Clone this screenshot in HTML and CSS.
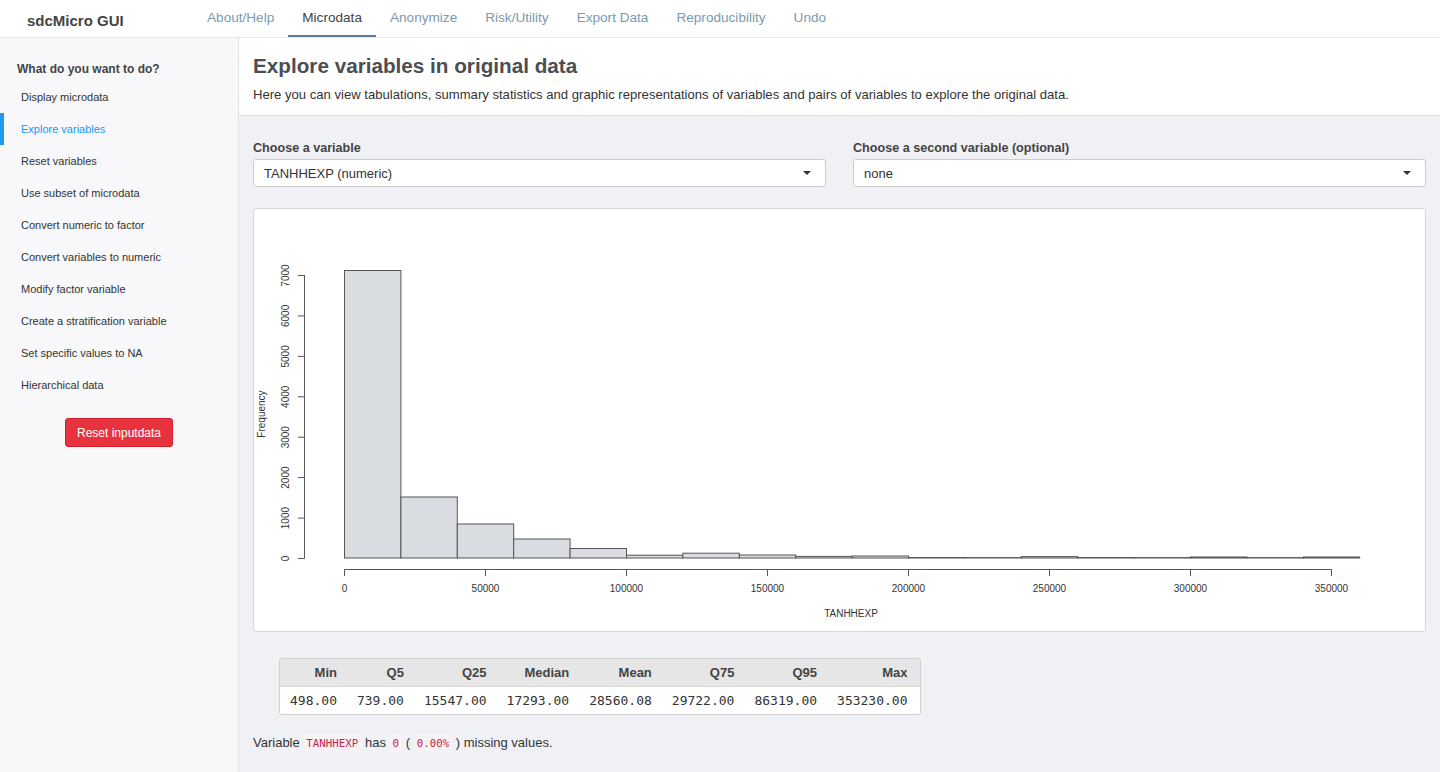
FILE: index.html
```html
<!DOCTYPE html>
<html lang="en">
<head>
<meta charset="utf-8">
<title>sdcMicro GUI</title>
<link rel="stylesheet" href="styles.css">
</head>
<body>
<header class="navbar">
  <div class="brand">sdcMicro GUI</div>
  <nav class="tabs">
    <a class="tab">About/Help</a>
    <a class="tab active">Microdata</a>
    <a class="tab">Anonymize</a>
    <a class="tab">Risk/Utility</a>
    <a class="tab">Export Data</a>
    <a class="tab">Reproducibility</a>
    <a class="tab">Undo</a>
  </nav>
</header>
<div class="layout">
  <aside class="sidebar">
    <h4 class="side-title">What do you want to do?</h4>
    <ul class="menu">
      <li class="menu-item">Display microdata</li>
      <li class="menu-item active">Explore variables</li>
      <li class="menu-item">Reset variables</li>
      <li class="menu-item">Use subset of microdata</li>
      <li class="menu-item">Convert numeric to factor</li>
      <li class="menu-item">Convert variables to numeric</li>
      <li class="menu-item">Modify factor variable</li>
      <li class="menu-item">Create a stratification variable</li>
      <li class="menu-item">Set specific values to NA</li>
      <li class="menu-item">Hierarchical data</li>
    </ul>
    <div class="btn-wrap"><button class="btn-danger">Reset inputdata</button></div>
  </aside>
  <main class="main">
    <section class="page-head">
      <h2 class="page-title">Explore variables in original data</h2>
      <p class="page-sub">Here you can view tabulations, summary statistics and graphic representations of variables and pairs of variables to explore the original data.</p>
    </section>
    <section class="content">
      <div class="selects">
        <div class="field">
          <label class="field-label">Choose a variable</label>
          <div class="select"><span>TANHHEXP (numeric)</span><span class="caret"></span></div>
        </div>
        <div class="field">
          <label class="field-label">Choose a second variable (optional)</label>
          <div class="select"><span>none</span><span class="caret"></span></div>
        </div>
      </div>
      <div class="plot-card">
        <svg class="plot" width="1171" height="422" viewBox="254 209 1171 422" xmlns="http://www.w3.org/2000/svg">
          <g class="bars" fill="#d9dde1" stroke="#555" stroke-width="1">
            <rect x="344.5" y="270.5" width="56.4" height="287.5"/>
            <rect x="400.9" y="497" width="56.4" height="61"/>
            <rect x="457.3" y="524" width="56.4" height="34"/>
            <rect x="513.7" y="539" width="56.4" height="19"/>
            <rect x="570.1" y="548.5" width="56.4" height="9.5"/>
            <rect x="626.5" y="555.2" width="56.4" height="2.8"/>
            <rect x="682.9" y="553.2" width="56.4" height="4.8"/>
            <rect x="739.3" y="555" width="56.4" height="3"/>
            <rect x="795.7" y="556.4" width="56.4" height="1.6"/>
            <rect x="852.1" y="556" width="56.4" height="2"/>
            <rect x="908.5" y="557.5" width="56.4" height="0.5"/>
            <rect x="964.9" y="557.6" width="56.4" height="0.4"/>
            <rect x="1021.3" y="556.6" width="56.4" height="1.4"/>
            <rect x="1077.7" y="557.5" width="56.4" height="0.5"/>
            <rect x="1134.1" y="557.6" width="56.4" height="0.4"/>
            <rect x="1190.5" y="557" width="56.4" height="1"/>
            <rect x="1246.9" y="557.6" width="56.4" height="0.4"/>
            <rect x="1303.3" y="557" width="56.4" height="1"/>
          </g>
          <g class="axes" stroke="#555" stroke-width="1" fill="none">
            <path d="M304.5 275 V558.5"/>
            <path d="M298 558.5 H304.5 M298 518.1 H304.5 M298 477.6 H304.5 M298 437.2 H304.5 M298 396.8 H304.5 M298 356.4 H304.5 M298 315.9 H304.5 M298 275.5 H304.5"/>
            <path d="M344.5 569.5 H1331.5"/>
            <path d="M344.5 569.5 V576 M485.5 569.5 V576 M626.5 569.5 V576 M767.5 569.5 V576 M908.5 569.5 V576 M1049.5 569.5 V576 M1190.5 569.5 V576 M1331.5 569.5 V576"/>
          </g>
          <g class="ylabels" font-family="Liberation Sans, Arial, sans-serif" font-size="10" fill="#333" text-anchor="middle">
            <text x="289" y="558.5" transform="rotate(-90 289 558.5)">0</text>
            <text x="289" y="518.1" transform="rotate(-90 289 518.1)">1000</text>
            <text x="289" y="477.6" transform="rotate(-90 289 477.6)">2000</text>
            <text x="289" y="437.2" transform="rotate(-90 289 437.2)">3000</text>
            <text x="289" y="396.8" transform="rotate(-90 289 396.8)">4000</text>
            <text x="289" y="356.4" transform="rotate(-90 289 356.4)">5000</text>
            <text x="289" y="315.9" transform="rotate(-90 289 315.9)">6000</text>
            <text x="289" y="275.5" transform="rotate(-90 289 275.5)">7000</text>
            <text x="265" y="414" transform="rotate(-90 265 414)">Frequency</text>
          </g>
          <g class="xlabels" font-family="Liberation Sans, Arial, sans-serif" font-size="10" fill="#333" text-anchor="middle">
            <text x="344.5" y="592">0</text>
            <text x="485.5" y="592">50000</text>
            <text x="626.5" y="592">100000</text>
            <text x="767.5" y="592">150000</text>
            <text x="908.5" y="592">200000</text>
            <text x="1049.5" y="592">250000</text>
            <text x="1190.5" y="592">300000</text>
            <text x="1331.5" y="592">350000</text>
            <text x="851" y="617">TANHHEXP</text>
          </g>
        </svg>
      </div>
      <table class="stats">
        <thead>
          <tr><th>Min</th><th>Q5</th><th>Q25</th><th>Median</th><th>Mean</th><th>Q75</th><th>Q95</th><th>Max</th></tr>
        </thead>
        <tbody>
          <tr><td>498.00</td><td>739.00</td><td>15547.00</td><td>17293.00</td><td>28560.08</td><td>29722.00</td><td>86319.00</td><td>353230.00</td></tr>
        </tbody>
      </table>
      <p class="missing">Variable <code>TANHHEXP</code> has <code>0</code> ( <code>0.00%</code> ) missing values.</p>
    </section>
  </main>
</div>
</body>
</html>
```
FILE: styles.css
```css
* { box-sizing: border-box; }
html, body { margin: 0; padding: 0; height: 100%; }
body {
  font-family: "Liberation Sans", Arial, Helvetica, sans-serif;
  color: #333;
  background: #fff;
  overflow: hidden;
}

/* Navbar */
.navbar {
  display: flex;
  height: 38px;
  border-bottom: 1px solid #e5e5e5;
  background: #fff;
}
.brand {
  width: 193px;
  padding-left: 27px;
  font-weight: 700;
  font-size: 15px;
  color: #444;
  display: flex;
  align-items: center;
  padding-top: 4px;
}
.tabs { display: flex; }
.tab {
  display: flex;
  align-items: center;
  padding: 0 14px;
  font-size: 13.6px;
  color: #7a9ab0;
  height: 37px;
  border-bottom: 2px solid transparent;
}
.tab.active {
  color: #444;
  border-bottom-color: #5d7c96;
}

/* Layout */
.layout {
  display: flex;
  height: calc(100vh - 38px);
}
.sidebar {
  width: 239px;
  flex: none;
  background: #f8f8fa;
  border-right: 1px solid #e2e2e6;
  padding-top: 24px;
}
.side-title {
  margin: 0 0 4px;
  padding-left: 17px;
  font-size: 12px;
  line-height: 15px;
  font-weight: 700;
  color: #444;
}
.menu { list-style: none; margin: 0; padding: 0; }
.menu-item {
  height: 32px;
  line-height: 32px;
  padding-left: 21px;
  font-size: 11px;
  color: #333;
}
.menu-item.active {
  color: #2196f3;
  box-shadow: inset 4px 0 0 #1e9bf0;
}
.btn-wrap {
  display: flex;
  justify-content: center;
  margin-top: 17px;
}
.btn-danger {
  width: 108px;
  height: 29px;
  background: #e8333f;
  border: 1px solid #d21f2c;
  border-radius: 3px;
  color: #fff;
  font-family: inherit;
  font-size: 12px;
  padding: 0;
}

/* Main */
.main {
  flex: 1;
  background: #f0f1f5;
  display: flex;
  flex-direction: column;
}
.page-head {
  background: #fff;
  padding: 16px 14px 12px;
  border-bottom: 1px solid #dcdde0;
}
.page-title {
  margin: 0 0 9px;
  font-size: 20.7px;
  line-height: 24px;
  font-weight: 700;
  color: #4a4f55;
}
.page-sub {
  margin: 0;
  font-size: 13.1px;
  line-height: 16px;
  color: #333;
}
.content {
  padding: 25px 14px 0;
}
.selects {
  display: grid;
  grid-template-columns: 1fr 1fr;
  column-gap: 27px;
}
.field-label {
  display: block;
  font-size: 12.6px;
  line-height: 15px;
  font-weight: 700;
  color: #444;
  margin-bottom: 3px;
}
.select {
  display: flex;
  align-items: center;
  justify-content: space-between;
  height: 28px;
  background: #fff;
  border: 1px solid #ccc;
  border-radius: 3px;
  padding: 0 14px 0 10px;
  font-size: 13px;
  color: #333;
}
.caret {
  width: 0;
  height: 0;
  border-left: 4px solid transparent;
  border-right: 4px solid transparent;
  border-top: 4px solid #333;
}
.plot-card {
  margin-top: 21px;
  background: #fff;
  border: 1px solid #d6d6d8;
  border-radius: 3px;
  height: 424px;
}
.plot { display: block; }

.stats {
  margin: 26px 0 0 26px;
  border-collapse: separate;
  border-spacing: 0;
  border: 1px solid #cfcfcf;
  border-radius: 3px;
  background: #fff;
  overflow: hidden;
}
.stats th {
  background: #e6e6e6;
  font-size: 13px;
  font-weight: 700;
  color: #444;
  text-align: right;
  height: 28px;
  padding: 0 10px;
  border-bottom: 1px solid #d6d6d6;
}
.stats td {
  font-family: "DejaVu Sans Mono", "Liberation Mono", monospace;
  font-size: 13px;
  color: #333;
  text-align: right;
  height: 27px;
  padding: 0 10px;
}
.stats th:last-child,
.stats td:last-child {
  padding-right: 12px;
}
.missing {
  margin: 19px 0 0;
  font-size: 13px;
  line-height: 18px;
  color: #333;
}
.missing code {
  font-family: "DejaVu Sans Mono", "Liberation Mono", monospace;
  font-size: 10.8px;
  color: #c7254e;
  background: #f9f2f4;
  padding: 2px 3px;
  border-radius: 3px;
}
```
